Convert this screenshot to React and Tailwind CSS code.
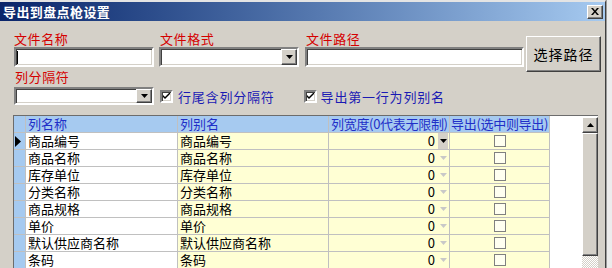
import React from 'react'

const FONT = "font-['Noto_Sans_CJK_SC','Noto_Sans',sans-serif]"
const SUNKEN = "border-2 border-t-[#808080] border-l-[#808080] border-b-white border-r-white shadow-[inset_1px_1px_0_#404040,inset_-1px_-1px_0_#d4d0c8]"
const RAISED = "bg-[#d4d0c8] border border-t-white border-l-white border-b-[#404040] border-r-[#404040] shadow-[inset_-1px_-1px_0_#808080]"

const rows = ['商品编号', '商品名称', '库存单位', '分类名称', '商品规格', '单价', '默认供应商名称', '条码']

const DownArrow = ({ color = '#000' }) => (
  <svg width="7" height="4" viewBox="0 0 7 4">
    <path d="M0 0h7L3.5 4z" fill={color} />
  </svg>
)

const Combo = ({ w, h = 'h-[20px]' }) => (
  <div className={`${SUNKEN} ${w} ${h} bg-white flex justify-end`}>
    <div className={`${RAISED} w-[16px] h-full flex items-center justify-center`}>
      <DownArrow />
    </div>
  </div>
)

const Check = () => (
  <div className={`${SUNKEN} w-[13px] h-[13px] bg-white flex items-center justify-center`}>
    <svg width="7" height="7" viewBox="0 0 7 7">
      <path d="M0 2l2 2 5-5v2L2 6 0 4z" fill="#000" />
    </svg>
  </div>
)

export default function App() {
  return (
    <div className={`w-[612px] h-[268px] overflow-hidden flex bg-[#d4d0c8] ${FONT}`}>
      {/* dialog */}
      <div className="w-[606px] h-full flex flex-col border-t-2 border-[#e4e4e4] border-r border-r-[#404040]">
        {/* title */}
        <div className="h-[19px] shrink-0 bg-linear-to-r from-[#0a246a] to-[#a6caf0] flex items-center justify-between pl-[3px] pr-[2px]">
          <div className="text-white font-bold text-[13px] leading-[19px] tracking-[0.4px]">导出到盘点枪设置</div>
          <div className={`${RAISED} w-[16px] h-[14px] flex items-center justify-center`}>
            <svg width="8" height="7" viewBox="0 0 8 7">
              <path d="M0 0h2l2 2.5L6 0h2L5 3.5 8 7H6L4 4.5 2 7H0l3-3.5z" fill="#000" />
            </svg>
          </div>
        </div>

        {/* first row */}
        <div className="flex items-start pl-[14px] mt-[9px] h-[37px]">
          <div className="flex flex-col w-[140px]">
            <div className="text-[#d40000] text-[13px] leading-[17px] tracking-[0.6px]">文件名称</div>
            <div className={`${SUNKEN} h-[20px] bg-white flex items-center pl-[1px]`}>
              <div className="w-px h-[13px] bg-black" />
            </div>
          </div>
          <div className="flex flex-col w-[140px] ml-[5px]">
            <div className="text-[#d40000] text-[13px] leading-[17px] tracking-[0.6px] pl-px">文件格式</div>
            <Combo w="w-[140px]" />
          </div>
          <div className="flex flex-col w-[219px] ml-[6px]">
            <div className="text-[#d40000] text-[13px] leading-[17px] tracking-[0.6px] pl-px">文件路径</div>
            <div className={`${SUNKEN} h-[20px] bg-white`} />
          </div>
          <div className={`${RAISED} ml-[2px] mt-[6px] w-[75px] h-[36px] shrink-0 flex items-center justify-center text-[14px] tracking-[1px] text-black`}>
            选择路径
          </div>
        </div>

        {/* second row */}
        <div className="flex items-end pl-[14px] mt-[1px]">
          <div className="flex flex-col w-[140px]">
            <div className="text-[#d40000] text-[13px] leading-[17px] tracking-[0.6px] pl-px">列分隔符</div>
            <div className="mt-[2px]">
              <Combo w="w-[140px]" h="h-[18px]" />
            </div>
          </div>
          <div className="flex items-center ml-[6px] h-[18px]">
            <Check />
            <span className="ml-[5px] text-[13px] leading-[17px] tracking-[0.8px] text-[#1a1ab4]">行尾含列分隔符</span>
          </div>
          <div className="flex items-center ml-[29px] h-[18px]">
            <Check />
            <span className="ml-[4px] text-[13px] leading-[17px] tracking-[0.8px] text-[#1a1ab4]">导出第一行为列别名</span>
          </div>
        </div>

        {/* grid */}
        <div className="ml-[13px] mt-[10px] w-[585px] flex-1 flex border-t border-l border-[#6c6c6c] bg-white text-[13px] leading-[16px]">
          <div className="flex flex-col">
            <div className="flex h-[17px] shrink-0 text-[#1f2fc8]">
              <div className="w-[12px] bg-[#a6caf0] border-r border-b border-[#c0c0c0]" />
              <div className="w-[152px] bg-[#a6caf0] border-r border-b border-[#c0c0c0] pl-[2px]">列名称</div>
              <div className="w-[151px] bg-[#a6caf0] border-r border-b border-[#c0c0c0] pl-[2px]">列别名</div>
              <div className="w-[121px] bg-[#a6caf0] border-r border-b border-[#c0c0c0] pl-[2px] tracking-[-0.3px]">列宽度(0代表无限制)</div>
              <div className="w-[100px] bg-[#a6caf0] border-r border-b border-[#c0c0c0] pl-[1px] tracking-[-0.3px]">导出(选中则导出)</div>
            </div>
            {rows.map((r, i) => (
              <div key={r} className="flex h-[17px] shrink-0 text-black">
                <div className="w-[12px] bg-[#a6caf0] border-r border-b border-[#c0c0c0] flex items-center">
                  {i === 0 && (
                    <svg width="7" height="11" viewBox="0 0 7 11">
                      <path d="M1 0l6 5.5L1 11z" fill="#000" />
                    </svg>
                  )}
                </div>
                <div className="w-[152px] bg-white border-r border-b border-[#c0c0c0] pl-[2px]">{r}</div>
                <div className="w-[151px] bg-[#ffffd4] border-r border-b border-[#c0c0c0] pl-[2px]">{r}</div>
                <div className="w-[121px] bg-[#ffffd4] border-r border-b border-[#c0c0c0] flex justify-end items-center">
                  <span className="mr-[3px]">0</span>
                  <div className={`w-[10px] h-full mr-px flex items-center justify-center ${i === 0 ? 'bg-[#d4d0c8]' : ''}`}>
                    <DownArrow color={i === 0 ? '#000' : '#c8c8c8'} />
                  </div>
                </div>
                <div className="w-[100px] bg-[#ffffd4] border-r border-b border-[#c0c0c0] flex items-center justify-center">
                  <div className="w-[12px] h-[12px] border border-[#808080] bg-[#fffff0]" />
                </div>
              </div>
            ))}
          </div>
          <div className="flex-1" />
          {/* scrollbar */}
          <div className="w-[16px] flex flex-col pt-px">
            <div className={`${RAISED} h-[16px] shrink-0 flex items-center justify-center`}>
              <svg width="7" height="4" viewBox="0 0 7 4">
                <path d="M0 4h7L3.5 0z" fill="#000" />
              </svg>
            </div>
            <div className={`${RAISED} h-[123px] shrink-0`} />
            <div className="flex-1 bg-[repeating-conic-gradient(#d4d0c8_0%_25%,#ffffff_0%_50%)] bg-size-[2px_2px]" />
          </div>
        </div>
      </div>
      {/* edge of window behind */}
      <div className="flex-1 bg-[#ececec] border-l border-[#9a9a9a]" />
    </div>
  )
}
